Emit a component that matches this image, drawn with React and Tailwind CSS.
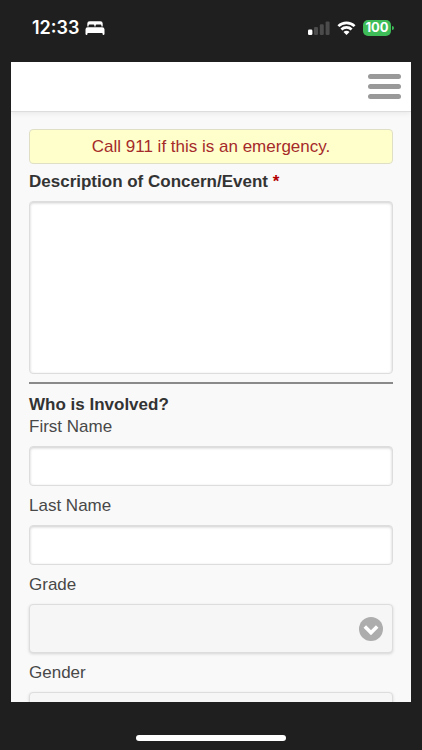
import React, { useState } from 'react';

const selectFields = [
  { id: 'grade', label: 'Grade', options: ['', '9', '10', '11', '12'] },
  { id: 'gender', label: 'Gender', options: ['', 'F', 'M'] },
];

const textFields = [
  { id: 'firstName', label: 'First Name' },
  { id: 'lastName', label: 'Last Name' },
];

const fieldStyle = 'block w-full rounded-[4px] border border-[#dddddd] outline-none focus:border-[#3388cc]';

function StatusBar() {
  return (
    <div className="flex h-[62px] shrink-0 items-start justify-between pt-4 pr-7 pl-8 text-white">
      <div className="flex h-6 items-center gap-[6px]">
        <span className="font-['Inter',sans-serif] text-lg font-semibold">12:33</span>
        {/* Sleep focus */}
        <svg width="20" height="14" viewBox="0 0 20 14" fill="currentColor" aria-hidden="true">
          <path d="M2.3 5.6V2.6A2.4 2.4 0 0 1 4.7 .2h10.6A2.4 2.4 0 0 1 17.7 2.6v3h-1.3V4.4a1 1 0 0 0-1-1h-3.8a1 1 0 0 0-1 1v1.2H9.4V4.4a1 1 0 0 0-1-1H4.6a1 1 0 0 0-1 1v1.2Z" />
          <path d="M2.9 6.2h14.2a2.4 2.4 0 0 1 2.4 2.4v4.5a.8.8 0 0 1-.8.8h-.4a.8.8 0 0 1-.8-.8v-1.2h-15v1.2a.8.8 0 0 1-.8.8h-.4a.8.8 0 0 1-.8-.8V8.6a2.4 2.4 0 0 1 2.6-2.4Z" />
        </svg>
      </div>
      <div className="flex h-6 items-center gap-[7px]">
        <svg width="22" height="14" viewBox="0 0 22 14" aria-hidden="true">
          <rect x="0" y="8.5" width="4.4" height="5.5" rx="1.3" fill="#ffffff" />
          <rect x="6" y="6" width="4" height="8" rx="1.2" fill="#4b4b4b" />
          <rect x="11.8" y="3.2" width="4" height="10.8" rx="1.2" fill="#4b4b4b" />
          <rect x="17.6" y="0.4" width="4" height="13.6" rx="1.2" fill="#4b4b4b" />
        </svg>
        <svg width="19" height="14" viewBox="0 0 18 14" fill="none" stroke="currentColor" strokeWidth="2.7" aria-hidden="true">
          <path d="M.9 5.1a11.6 11.6 0 0 1 16.2 0" />
          <path d="M3.9 8.5a7.3 7.3 0 0 1 10.2 0" />
          <path d="M9 14 6 11a4.2 4.2 0 0 1 6 0Z" fill="currentColor" stroke="none" />
        </svg>
        <div className="flex items-center">
          <span className="flex h-4 w-7 items-center justify-center rounded-[5px] bg-[#3dbc58] font-['Inter',sans-serif] text-[13px] font-bold">
            100
          </span>
          <span className="ml-px h-1 w-[2px] rounded-r-full bg-[#3dbc58]" />
        </div>
      </div>
    </div>
  );
}

function TextField({ id, label }) {
  return (
    <div>
      <label htmlFor={id} className="block">{label}</label>
      <input
        id={id}
        name={id}
        type="text"
        className={`${fieldStyle} mt-2 h-10 bg-white px-2 shadow-[inset_0_1px_3px_rgba(0,0,0,0.2)]`}
      />
    </div>
  );
}

function SelectField({ id, label, options }) {
  return (
    <div>
      <label htmlFor={id} className="block">{label}</label>
      <div className="relative mt-2">
        <select
          id={id}
          name={id}
          className={`${fieldStyle} h-[49px] appearance-none bg-[#f6f6f6] px-4 font-bold shadow-[0_1px_3px_rgba(0,0,0,0.15)]`}
        >
          {options.map((option) => (
            <option key={option} value={option}>{option}</option>
          ))}
        </select>
        <svg
          className="pointer-events-none absolute inset-y-0 right-[10px] my-auto"
          width="24"
          height="24"
          viewBox="0 0 24 24"
          aria-hidden="true"
        >
          <circle cx="12" cy="12" r="12" fill="#adadad" />
          <path d="M5.8 9.6 12 15.8l6.2-6.2" fill="none" stroke="#ffffff" strokeWidth="3.6" />
        </svg>
      </div>
    </div>
  );
}

export default function App() {
  const [description, setDescription] = useState('');
  const [menuOpen, setMenuOpen] = useState(false);

  return (
    <div className="flex h-screen flex-col bg-[#1f1f1f]">
      <StatusBar />

      <div className="mx-[11px] min-h-0 flex-1 overflow-hidden bg-[#f9f9f9] font-['Liberation_Sans',Arial,sans-serif] text-[17px] leading-[22px] text-[#484848]">
        <header className="flex h-[50px] items-center justify-end border-b border-[#dddddd] bg-white px-2 shadow-[0_1px_6px_rgba(0,0,0,0.08)]">
          <button
            type="button"
            aria-label="Menu"
            aria-expanded={menuOpen}
            onClick={() => setMenuOpen(!menuOpen)}
            className="flex w-[37px] flex-col gap-[5px] px-[2px]"
          >
            <span className="h-[5px] w-full rounded-full bg-[#999999]" />
            <span className="h-[5px] w-full rounded-full bg-[#999999]" />
            <span className="h-[5px] w-full rounded-full bg-[#999999]" />
          </button>
        </header>

        <form className="px-[18px] pt-[17px]">
          <p className="rounded-[4px] border border-[#dfdfc6] bg-[#ffffcc] py-[6px] text-center leading-[21px] text-[#a52a2a]">
            Call 911 if this is an emergency.
          </p>

          <label htmlFor="description" className="mt-[7px] block font-bold text-[#333333]">
            Description of Concern/Event <span className="text-[#b30000]">*</span>
          </label>
          <textarea
            id="description"
            name="description"
            value={description}
            onChange={(e) => setDescription(e.target.value)}
            className={`${fieldStyle} mt-2 h-[173px] resize-none bg-white p-2 shadow-[inset_0_1px_3px_rgba(0,0,0,0.2)]`}
          />

          <hr className="my-2 border-t-2 border-[#8a8a8a]" />

          <h2 className="mt-[10px] font-bold text-[#333333]">Who is Involved?</h2>
          <div className="flex flex-col gap-[9px]">
            {textFields.map((field) => (
              <TextField key={field.id} {...field} />
            ))}
            {selectFields.map((field) => (
              <SelectField key={field.id} {...field} />
            ))}
          </div>
        </form>
      </div>

      <div className="flex h-12 shrink-0 items-end justify-center pb-[9px]">
        <div className="h-[6px] w-[150px] rounded-full bg-white" />
      </div>
    </div>
  );
}
